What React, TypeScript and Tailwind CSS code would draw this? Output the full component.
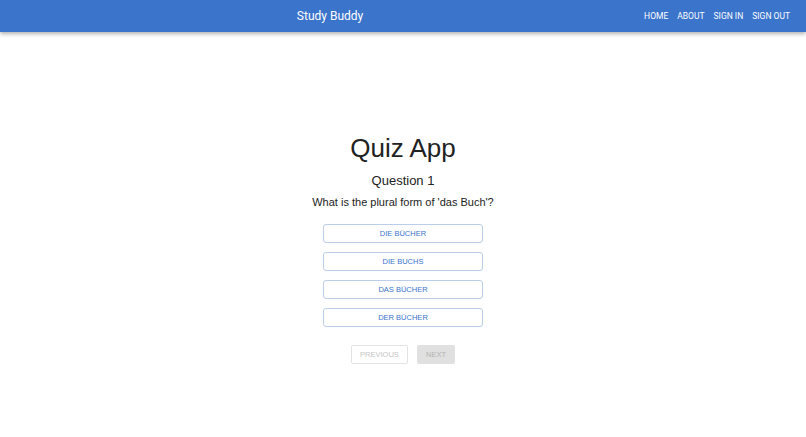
import { useState } from "react";

const answers = ["Die Bücher", "Die Buchs", "Das Bücher", "Der Bücher"];

export default function App() {
  const [selected, setSelected] = useState<number | null>(null);

  return (
    <div className="min-h-screen bg-white font-['Liberation_Sans',Arial,sans-serif] text-[#222]">
      <header className="flex h-8 items-center bg-[#3a74cb] px-4 font-['Roboto',sans-serif] text-white shadow-[0_2px_4px_rgba(0,0,0,0.3)]">
        <div className="flex-1 text-center text-[12px]">Study Buddy</div>
        <nav className="flex items-center gap-[9px] text-[8.5px] uppercase">
          <a href="#">Home</a>
          <a href="#">About</a>
          <a href="#">Sign In</a>
          <a href="#">Sign Out</a>
        </nav>
      </header>

      <main className="flex flex-col items-center pt-[98px]">
        <h1 className="text-[26px] leading-9">Quiz App</h1>
        <h2 className="mt-[5px] text-[13px] leading-5">Question 1</h2>
        <p className="mt-[3px] text-[11px] leading-4">What is the plural form of 'das Buch'?</p>

        <div className="mt-[14px] flex flex-col gap-[9px]">
          {answers.map((a, i) => (
            <button
              key={a}
              type="button"
              onClick={() => setSelected(i)}
              className={`h-[19px] w-[160px] rounded-[3px] border text-[7.5px] font-medium uppercase text-[#3a74cb] ${
                selected === i ? "border-[#3a74cb] bg-[#eef3fb]" : "border-[#bccdea]"
              }`}
            >
              {a}
            </button>
          ))}
        </div>

        <div className="mt-[18px] flex gap-[9px]">
          <button
            type="button"
            disabled
            className="h-[19px] w-[57px] rounded-[2px] border border-[#e3e3e3] text-[7.5px] uppercase text-[#c4c4c4]"
          >
            Previous
          </button>
          <button
            type="button"
            disabled
            className="h-[19px] w-[38px] rounded-[2px] bg-[#e0e0e0] text-[7.5px] uppercase text-[#b3b3b3]"
          >
            Next
          </button>
        </div>
      </main>
    </div>
  );
}
